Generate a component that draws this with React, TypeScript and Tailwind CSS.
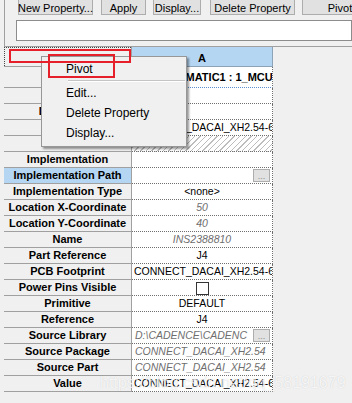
import React from 'react';

type Row = {
  label: string;
  value?: string;
  kind?: 'center' | 'left' | 'muted' | 'mutedLeft' | 'bold' | 'hatch' | 'check';
  button?: boolean;
  selected?: boolean;
  tall?: boolean;
};

const rows: Row[] = [
  { label: '', value: 'SCHEMATIC1 : 1_MCU : INS2388810', kind: 'bold', tall: true },
  { label: 'Color' },
  { label: 'Designator' },
  { label: 'Graphic', value: 'CONNECT_DACAI_XH2.54-6.Normal', kind: 'left' },
  { label: 'ID', kind: 'hatch' },
  { label: 'Implementation' },
  { label: 'Implementation Path', button: true, selected: true },
  { label: 'Implementation Type', value: '<none>', kind: 'center' },
  { label: 'Location X-Coordinate', value: '50', kind: 'muted' },
  { label: 'Location Y-Coordinate', value: '40', kind: 'muted' },
  { label: 'Name', value: 'INS2388810', kind: 'muted' },
  { label: 'Part Reference', value: 'J4', kind: 'center' },
  { label: 'PCB Footprint', value: 'CONNECT_DACAI_XH2.54-6', kind: 'left' },
  { label: 'Power Pins Visible', kind: 'check' },
  { label: 'Primitive', value: 'DEFAULT', kind: 'center' },
  { label: 'Reference', value: 'J4', kind: 'center' },
  { label: 'Source Library', value: 'D:\\CADENCE\\CADENC', kind: 'mutedLeft', button: true },
  { label: 'Source Package', value: 'CONNECT_DACAI_XH2.54', kind: 'mutedLeft' },
  { label: 'Source Part', value: 'CONNECT_DACAI_XH2.54', kind: 'mutedLeft' },
  { label: 'Value', value: 'CONNECT_DACAI_XH2.54-6', kind: 'left' },
];

function ToolButton({ label, className }: { label: string; className: string }) {
  return (
    <div className={`shrink-0 h-full bg-[#e1e1e1] border border-[#adadad] flex items-center justify-center pt-[3px] text-[11px] text-black whitespace-nowrap ${className}`}>
      {label}
    </div>
  );
}

function DotsButton() {
  return (
    <div className="absolute right-[2px] top-[1px] w-[17px] h-[13px] bg-[#e1e1e1] border border-[#adadad] flex items-end justify-center text-[9px] leading-[9px] text-[#888]">
      ...
    </div>
  );
}

function ValueCell({ row }: { row: Row }) {
  const base = 'relative w-[141px] bg-white border-r border-b border-dotted border-[#6f6f6f] overflow-hidden whitespace-nowrap text-[10.5px]';
  const borderFix = row.tall ? ' border-b-[#5b8fd0]' : '';
  if (row.kind === 'hatch') {
    return (
      <div className={base + ' bg-[repeating-linear-gradient(135deg,#bdbdbd_0px,#bdbdbd_1px,#ffffff_1px,#ffffff_4px)]'} />
    );
  }
  if (row.kind === 'check') {
    return (
      <div className={base + ' flex items-center justify-center'}>
        <div className="w-[13px] h-[13px] border border-[#333] bg-white mt-[1px]" />
      </div>
    );
  }
  let text = 'text-black';
  let align = 'justify-center';
  if (row.kind === 'left') align = 'justify-start pl-[2px]';
  if (row.kind === 'muted') text = 'italic text-[#6e6e6e]';
  if (row.kind === 'mutedLeft') {
    text = 'italic text-[#6e6e6e]';
    align = 'justify-start pl-[3px]';
  }
  if (row.kind === 'bold') {
    text = 'font-bold text-black text-[11px]';
    align = 'justify-start pl-[23px]';
  }
  return (
    <div className={base + borderFix + ' flex items-center ' + align}>
      <span className={text}>{row.value}</span>
      {row.button && <DotsButton />}
    </div>
  );
}

export default function App() {
  return (
    <div className="relative w-[352px] h-[403px] bg-[#f0f0f0] overflow-hidden font-['Liberation_Sans',Arial,sans-serif] text-black">
      {/* top panel */}
      <div className="ml-[4px] h-[47px] flex flex-col border-l border-b border-[#a0a0a0]">
        <div className="flex h-[17px] -mt-[2px] shrink-0">
          <ToolButton label="New Property..." className="ml-[13px] w-[75px]" />
          <ToolButton label="Apply" className="ml-[8px] w-[45px]" />
          <ToolButton label="Display..." className="ml-[7px] w-[48px]" />
          <ToolButton label="Delete Property" className="ml-[9px] w-[85px]" />
          <ToolButton label="Pivot" className="ml-[7px] w-[76px]" />
        </div>
        <div className="ml-[11px] mt-[5px] h-[21px] shrink-0 bg-white border border-[#8c8c8c]" />
      </div>

      {/* property grid */}
      <div className="ml-[4px] w-[269px]">
        <div className="flex h-[20px]">
          <div className="w-[128px] border-r border-b border-[#a0a0a0]">
            <div className="w-full h-full border-l border-t border-dotted border-[#444]" />
          </div>
          <div className="w-[141px] bg-[#b5d6f2] border-r border-b border-[#8da3b8] flex items-center justify-center pt-[3px] text-[11px] font-bold">
            A
          </div>
        </div>
        {rows.map((row, i) => (
          <div key={i} className={`flex ${row.tall ? 'h-[21px]' : 'h-[16px]'}`}>
            <div
              className={`w-[128px] border-r border-b border-[#a0a0a0] flex items-center justify-center text-[11px] font-bold whitespace-nowrap ${
                row.selected ? 'bg-[#b5d6f2]' : ''
              }`}
            >
              {row.label}
            </div>
            <ValueCell row={row} />
          </div>
        ))}
      </div>

      {/* context menu */}
      <div className="absolute left-[41px] top-[56px] w-[146px] h-[91px] bg-[#f0f0f0] border border-[#979797] shadow-[2px_2px_2px_rgba(0,0,0,0.4)] pt-[2px] text-[12px]">
        <div className="h-[20px] flex items-center pl-[24px]">Pivot</div>
        <div className="h-[4px] pt-[1px] pl-[26px] pr-[1px]">
          <div className="h-[1px] bg-[#c4c4c4]" />
          <div className="h-[1px] bg-white" />
        </div>
        <div className="h-[20px] flex items-center pl-[24px]">Edit...</div>
        <div className="h-[20px] flex items-center pl-[24px]">Delete Property</div>
        <div className="h-[20px] flex items-center pl-[24px]">Display...</div>
      </div>

      {/* red highlight boxes */}
      <div className="absolute left-[9px] top-[49px] w-[122px] h-[14px] border-2 border-[#e5202a]" />
      <div className="absolute left-[48px] top-[54px] w-[67px] h-[24px] border-2 border-[#e5202a]" />

      {/* watermark */}
      <div className="absolute left-[100px] top-[374px] text-[16px] leading-[18px] text-white/80 whitespace-nowrap [text-shadow:0_0_1px_rgba(0,0,0,0.18)] pointer-events-none">
        https://blog.csdn.net/qq_58191679
      </div>
    </div>
  );
}
